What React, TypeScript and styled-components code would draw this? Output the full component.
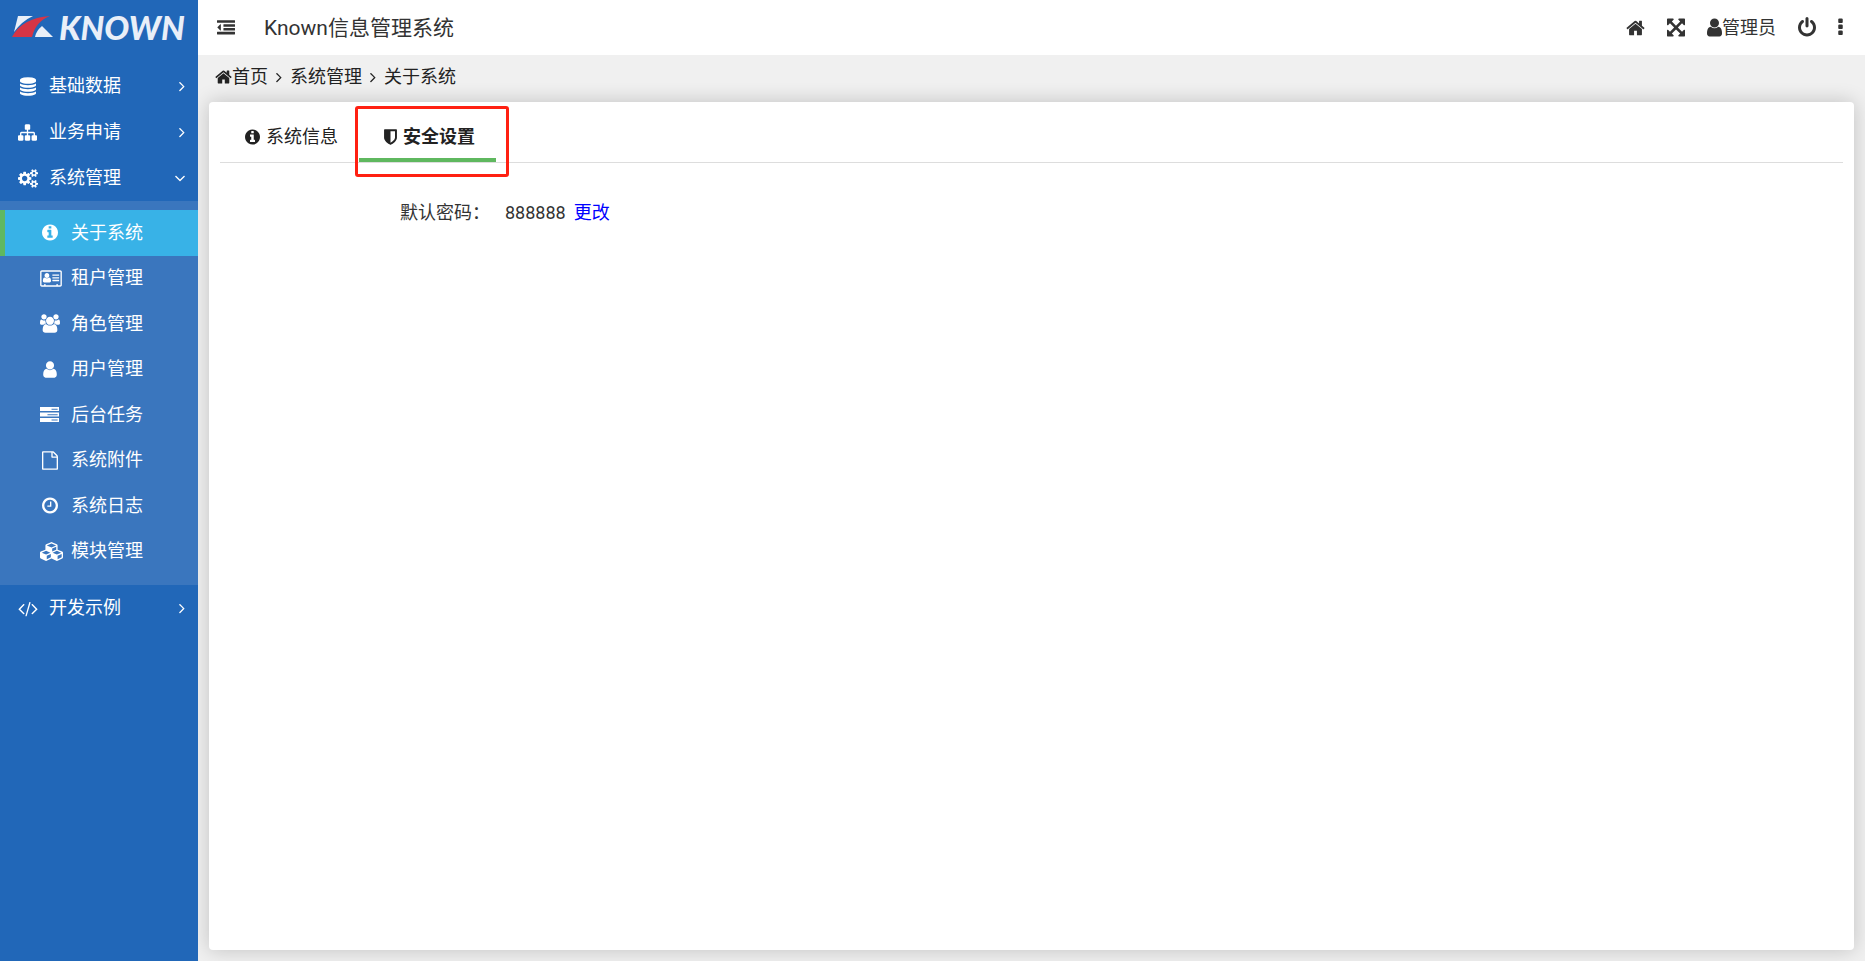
import React from 'react';
import styled, { createGlobalStyle, css } from 'styled-components';

const GlobalStyle = createGlobalStyle`
  *, *::before, *::after { box-sizing: border-box; }
  body {
    margin: 0;
    background: #f0f0f0;
    color: #333;
    font-family: Roboto, "Noto Sans CJK SC", sans-serif;
    font-size: 18px;
    font-weight: 400;
    line-height: 24px;
  }
  a { color: inherit; text-decoration: none; }
  ul, ol, dl, dd, h1 { margin: 0; padding: 0; list-style: none; }
  button { border: 0; padding: 0; background: none; font: inherit; color: inherit; cursor: pointer; }
`;

/* Each glyph: [left edge, advance width, path] on a 1792 unit tall grid. */
const glyphs = {
  home: [64, 1664, 'M1472 992v480q0 26-19 45t-45 19h-384v-384h-256v384h-384q-26 0-45-19t-19-45v-480q0-1 .5-3t.5-3l575-474 575 474q1 2 1 6zm223-69l-62 74q-8 9-21 11h-3q-13 0-21-7l-692-577-692 577q-12 8-24 7-13-2-21-11l-62-74q-8-10-7-23.5t11-21.5l719-599q32-26 76-26t76 26l244 204v-195q0-14 9-23t23-9h192q14 0 23 9t9 23v408l219 182q10 8 11 21.5t-7 23.5z'],
  database: [128, 1536, 'M896 768q237 0 443-43t325-127v170q0 69-103 128t-280 93.5-385 34.5-385-34.5-280-93.5-103-128v-170q119 84 325 127t443 43zm0 768q237 0 443-43t325-127v170q0 69-103 128t-280 93.5-385 34.5-385-34.5-280-93.5-103-128v-170q119 84 325 127t443 43zm0-384q237 0 443-43t325-127v170q0 69-103 128t-280 93.5-385 34.5-385-34.5-280-93.5-103-128v-170q119 84 325 127t443 43zm0-1152q208 0 385 34.5t280 93.5 103 128v128q0 69-103 128t-280 93.5-385 34.5-385-34.5-280-93.5-103-128v-128q0-69 103-128t280-93.5 385-34.5z'],
  sitemap: [0, 1792, 'M1792 1248v320q0 40-28 68t-68 28h-320q-40 0-68-28t-28-68v-320q0-40 28-68t68-28h96v-192h-512v192h96q40 0 68 28t28 68v320q0 40-28 68t-68 28h-320q-40 0-68-28t-28-68v-320q0-40 28-68t68-28h96v-192h-512v192h96q40 0 68 28t28 68v320q0 40-28 68t-68 28h-320q-40 0-68-28t-28-68v-320q0-40 28-68t68-28h96v-192q0-52 38-90t90-38h512v-192h-96q-40 0-68-28t-28-68v-320q0-40 28-68t68-28h320q40 0 68 28t28 68v320q0 40-28 68t-68 28h-96v192h512q52 0 90 38t38 90v192h96q40 0 68 28t28 68z'],
  cogs: [0, 1920, 'M896 896q0-106-75-181t-181-75-181 75-75 181 75 181 181 75 181-75 75-181zm768 512q0-52-38-90t-90-38-90 38-38 90q0 53 37.5 90.5t90.5 37.5 90.5-37.5 37.5-90.5zm0-1024q0-52-38-90t-90-38-90 38-38 90q0 53 37.5 90.5t90.5 37.5 90.5-37.5 37.5-90.5zm-384 421v185q0 10-7 19.5t-16 10.5l-155 24q-11 35-32 76 34 48 90 115 7 11 7 20 0 12-7 19-23 30-82.5 89.5t-78.5 59.5q-11 0-21-7l-115-90q-37 19-77 31-11 108-23 155-7 24-30 24h-186q-11 0-20-7.5t-10-17.5l-23-153q-34-10-75-31l-118 89q-7 7-20 7-11 0-21-8-144-133-144-160 0-9 7-19 10-14 41-53t47-61q-23-44-35-82l-152-24q-10-1-17-9.5t-7-19.5v-185q0-10 7-19.5t16-10.5l155-24q11-35 32-76-34-48-90-115-7-11-7-20 0-12 7-20 22-30 82-89t79-59q11 0 21 7l115 90q34-18 77-32 11-108 23-154 7-24 30-24h186q11 0 20 7.5t10 17.5l23 153q34 10 75 31l118-89q8-7 20-7 11 0 21 8 144 133 144 160 0 8-7 19-12 16-42 54t-45 60q23 48 34 82l152 23q10 2 17 10.5t7 19.5zm640 533v140q0 16-149 31-12 27-30 52 51 113 51 138 0 4-4 7-122 71-124 71-8 0-46-47t-52-68q-20 2-30 2t-30-2q-14 21-52 68t-46 47q-2 0-124-71-4-3-4-7 0-25 51-138-18-25-30-52-149-15-149-31v-140q0-16 149-31 13-29 30-52-51-113-51-138 0-4 4-7 4-2 35-20t59-34 30-16q8 0 46 46.5t52 67.5q20-2 30-2t30 2q51-71 92-112l6-2q4 0 124 70 4 3 4 7 0 25-51 138 17 23 30 52 149 15 149 31zm0-1024v140q0 16-149 31-12 27-30 52 51 113 51 138 0 4-4 7-122 71-124 71-8 0-46-47t-52-68q-20 2-30 2t-30-2q-14 21-52 68t-46 47q-2 0-124-71-4-3-4-7 0-25 51-138-18-25-30-52-149-15-149-31v-140q0-16 149-31 13-29 30-52-51-113-51-138 0-4 4-7 4-2 35-20t59-34 30-16q8 0 46 46.5t52 67.5q20-2 30-2t30 2q51-71 92-112l6-2q4 0 124 70 4 3 4 7 0 25-51 138 17 23 30 52 149 15 149 31z'],
  info: [128, 1536, 'M1152 1376v-160q0-14-9-23t-23-9h-96v-512q0-14-9-23t-23-9h-320q-14 0-23 9t-9 23v160q0 14 9 23t23 9h96v320h-96q-14 0-23 9t-9 23v160q0 14 9 23t23 9h448q14 0 23-9t9-23zm-128-896v-160q0-14-9-23t-23-9h-192q-14 0-23 9t-9 23v160q0 14 9 23t23 9h192q14 0 23-9t9-23zm640 416q0 209-103 385.5t-279.5 279.5-385.5 103-385.5-103-279.5-279.5-103-385.5 103-385.5 279.5-279.5 385.5-103 385.5 103 279.5 279.5 103 385.5z'],
  card: [0, 2048, 'M1024 1131q0-64-9-117.5t-29.5-103-60.5-78-97-28.5q-6 4-30 18t-37.5 21.5-35.5 17.5-43 14.5-42 4.5-42-4.5-43-14.5-35.5-17.5-37.5-21.5-30-18q-57 0-97 28.5t-60.5 78-29.5 103-9 117.5 37 106.5 91 42.5h512q54 0 91-42.5t37-106.5zm-157-520q0-94-66.5-160.5t-160.5-66.5-160.5 66.5-66.5 160.5 66.5 160.5 160.5 66.5 160.5-66.5 66.5-160.5zm925 509v-64q0-14-9-23t-23-9h-576q-14 0-23 9t-9 23v64q0 14 9 23t23 9h576q14 0 23-9t9-23zm0-260v-56q0-15-10.5-25.5t-25.5-10.5h-568q-15 0-25.5 10.5t-10.5 25.5v56q0 15 10.5 25.5t25.5 10.5h568q15 0 25.5-10.5t10.5-25.5zm0-252v-64q0-14-9-23t-23-9h-576q-14 0-23 9t-9 23v64q0 14 9 23t23 9h576q14 0 23-9t9-23zM160 128H1888q66 0 113 47t47 113V1504q0 66-47 113t-113 47H160q-66 0-113-47T0 1504V288q0-66 47-113t113-47zM160 256q-32 0-32 32V1504q0 32 32 32H384V1440q0-32 32-32h64q32 0 32 32v96H1536v-96q0-32 32-32h64q32 0 32 32v96h224q32 0 32-32V288q0-32-32-32z'],
  users: [64, 1920, 'M657 896q-162 5-265 128h-134q-82 0-138-40.5t-56-118.5q0-353 124-353 6 0 43.5 21t97.5 42.5 119 21.5q67 0 133-23-5 37-5 66 0 139 81 256zm1071 637q0 120-73 189.5t-194 69.5h-874q-121 0-194-69.5t-73-189.5q0-53 3.5-103.5t14-109 26.5-108.5 43-97.5 62-81 85.5-53.5 111.5-20q10 0 43 21.5t73 48 107 48 135 21.5 135-21.5 107-48 73-48 43-21.5q61 0 111.5 20t85.5 53.5 62 81 43 97.5 26.5 108.5 14 109 3.5 103.5zm-1024-1277q0 106-75 181t-181 75-181-75-75-181 75-181 181-75 181 75 75 181zm704 384q0 159-112.5 271.5t-271.5 112.5-271.5-112.5-112.5-271.5 112.5-271.5 271.5-112.5 271.5 112.5 112.5 271.5zm576 225q0 78-56 118.5t-138 40.5h-134q-103-123-265-128 81-117 81-256 0-29-5-66 66 23 133 23 59 0 119-21.5t97.5-42.5 43.5-21q124 0 124 353zm-128-609q0 106-75 181t-181 75-181-75-75-181 75-181 181-75 181 75 75 181z'],
  user: [256, 1280, 'M1536 1399q0 109-62.5 187t-150.5 78h-854q-88 0-150.5-78t-62.5-187q0-85 8.5-160.5t31.5-152 58.5-131 94-89 134.5-34.5q131 128 313 128t313-128q76 0 134.5 34.5t94 89 58.5 131 31.5 152 8.5 160.5zm-256-887q0 159-112.5 271.5t-271.5 112.5-271.5-112.5-112.5-271.5 112.5-271.5 271.5-112.5 271.5 112.5 112.5 271.5z'],
  server: [0, 1792, 'M0 192H1792V576H0ZM0 704H1792V1088H0ZM0 1216H1792V1600H0ZM1088 352H1664V448H1088ZM704 864H1664V960H704ZM1088 1376H1664V1472H1088Z'],
  file: [128, 1536, 'M1596 380q28 28 48 76t20 88v1152q0 40-28 68t-68 28h-1344q-40 0-68-28t-28-68v-1600q0-40 28-68t68-28h896q40 0 88 20t76 48zm-444-244v376h376q-10-29-22-41l-313-313q-12-12-41-22zm384 1528v-1024h-416q-40 0-68-28t-28-68v-416h-768v1536h1280z'],
  clock: [128, 1536, 'M1024 544v448q0 14-9 23t-23 9h-320q-14 0-23-9t-9-23v-64q0-14 9-23t23-9h224v-352q0-14 9-23t23-9h64q14 0 23 9t9 23zm416 352q0-148-73-273t-198-198-273-73-273 73-198 198-73 273 73 273 198 198 273 73 273-73 198-198 73-273zm224 0q0 209-103 385.5t-279.5 279.5-385.5 103-385.5-103-279.5-279.5-103-385.5 103-385.5 279.5-279.5 385.5-103 385.5 103 279.5 279.5 103 385.5z'],
  cubes: [0, 2176, 'M640 1632l384-192v-314l-384 164v342zm-64-454l404-173-404-173-404 173zm1088 454l384-192v-314l-384 164v342zm-64-454l404-173-404-173-404 173zm-448-293l384-165v-266l-384 164v267zm-64-379l441-189-441-189-441 189zm1088 518v416q0 36-19 67t-52 47l-448 224q-25 14-57 14t-57-14l-448-224q-4-2-7-4-2 2-7 4l-448 224q-25 14-57 14t-57-14l-448-224q-33-16-52-47t-19-67v-416q0-38 21.5-70t56.5-48l434-186v-400q0-38 21.5-70t56.5-48l448-192q23-10 50-10t50 10l448 192q35 16 56.5 48t21.5 70v400l434 186q36 16 57 48t21 70z'],
  code: [-64, 1920, 'M553 1399l-50 50q-10 10-23 10t-23-10l-466-466q-10-10-10-23t10-23l466-466q10-10 23-10t23 10l50 50q10 10 10 23t-10 23l-393 393 393 393q10 10 10 23t-10 23zm591-1067l-373 1291q-4 13-15.5 19.5t-23.5 2.5l-62-17q-13-4-19.5-15.5t-2.5-24.5l373-1291q4-13 15.5-19.5t23.5-2.5l62 17q13 4 19.5 15.5t2.5 24.5zm657 651l-466 466q-10 10-23 10t-23-10l-50-50q-10-10-10-23t10-23l393-393-393-393q-10-10-10-23t10-23l50-50q10-10 23-10t23 10l466 466q10 10 10 23t-10 23z'],
  outdent: [0, 1792, 'M384 544v576q0 13-9.500 22.500t-22.500 9.500q-14 0-23-9l-288-288q-9-9-9-23t9-23l288-288q9-9 23-9 13 0 22.500 9.500t9.500 22.500zM32 1280h1728q32 0 32 32v192q0 32-32 32h-1728q-32 0-32-32v-192q0-32 32-32zM672 896h1088q32 0 32 32v192q0 32-32 32h-1088q-32 0-32-32v-192q0-32 32-32zM672 512h1088q32 0 32 32v192q0 32-32 32h-1088q-32 0-32-32v-192q0-32 32-32zM32 128h1728q32 0 32 32v192q0 32-32 32h-1728q-32 0-32-32v-192q0-32 32-32z'],
  expand: [128, 1536, 'M1411 541l-355 355 355 355 144-144q29-31 70-14 39 17 39 59v448q0 26-19 45t-45 19h-448q-42 0-59-40-17-39 14-69l144-144-355-355-355 355 144 144q31 30 14 69-17 40-59 40h-448q-26 0-45-19t-19-45v-448q0-42 40-59 39-17 69 14l144 144 355-355-355-355-144 144q-19 19-45 19-12 0-24-5-40-17-40-59v-448q0-26 19-45t45-19h448q42 0 59 40 17 39-14 69l-144 144 355 355 355-355-144-144q-31-30-14-69 17-40 59-40h448q26 0 45 19t19 45v448q0 42-39 59-13 5-25 5-26 0-45-19z'],
  power: [128, 1536, 'M1664 896q0 156-61 298t-164 245-245 164-298 61-298-61-245-164-164-245-61-298q0-182 80.500-343t226.500-270q43-32 95.500-25t83.500 50q32 42 24.500 94.500t-49.500 84.500q-98 74-151.500 181t-53.500 228q0 104 40.500 198.500t109.500 163.500 163.500 109.500 198.500 40.500 198.500-40.500 163.500-109.500 109.500-163.500 40.500-198.500q0-121-53.500-228t-151.500-181q-42-32-49.500-84.500t24.500-94.500q31-43 84-50t95 25q146 109 226.500 270t80.500 343zm-640-768v640q0 52-38 90t-90 38-90-38-38-90v-640q0-52 38-90t90-38 90 38 38 90z'],
  more: [704, 384, 'M1088 1248v192q0 40-28 68t-68 28h-192q-40 0-68-28t-28-68v-192q0-40 28-68t68-28h192q40 0 68 28t28 68zm0-512v192q0 40-28 68t-68 28h-192q-40 0-68-28t-28-68v-192q0-40 28-68t68-28h192q40 0 68 28t28 68zm0-512v192q0 40-28 68t-68 28h-192q-40 0-68-28t-28-68v-192q0-40 28-68t68-28h192q40 0 68 28t28 68z'],
  shield: [256, 1280, 'M1344 960v-640h-448v1137q119-63 213-137 235-184 235-360zm192-768v768q0 86-33.500 170.500t-83 150-118 127.500-126.500 103-121 77.500-89.500 49.500-42.500 20q-12 6-26 6t-26-6q-16-7-42.500-20t-89.500-49.500-121-77.500-126.500-103-118-127.500-83-150-33.500-170.500v-768q0-26 19-45t45-19h1152q26 0 45 19t19 45z'],
  right: [576, 640, 'M1171 960q0 13-10 23l-466 466q-10 10-23 10t-23-10l-50-50q-10-10-10-23t10-23l393-393-393-393q-10-10-10-23t10-23l50-50q10-10 23-10t23 10l466 466q10 10 10 23z'],
  down: [384, 1024, 'M1395 736q0 13-10 23l-466 466q-10 10-23 10t-23-10l-466-466q-10-10-10-23t10-23l50-50q10-10 23-10t23 10l393 393 393-393q10-10 23-10t23 10l50 50q10 10 10 23z'],
} satisfies Record<string, [number, number, string]>;

type GlyphName = keyof typeof glyphs;

const Svg = styled.svg`
  display: block;
  flex: none;
  overflow: visible;
  fill: currentColor;
`;

function Icon({ name, size = 18 }: { name: GlyphName; size?: number }) {
  const [left, width, path] = glyphs[name];
  return (
    <Svg
      aria-hidden="true"
      height={size}
      width={Math.round((Number(width) * size) / 1792)}
      viewBox={`${left} 0 ${width} 1792`}
    >
      <path d={path as string} fillRule="evenodd" />
    </Svg>
  );
}

const Shell = styled.div`
  display: grid;
  grid-template-columns: 198px minmax(0, 1fr);
  min-height: 100vh;
`;

const Sidebar = styled.aside`
  background: #2167b8;
  color: #fff;
  z-index: 1;
`;

const Brand = styled.a`
  display: flex;
  align-items: center;
  gap: 6px;
  height: 53px;
  padding-left: 12px;
  margin-bottom: 10px;
  color: #e9eff8;
  font: italic 900 33px/32px Lato, sans-serif;
`;

const rowStyle = css`
  display: flex;
  align-items: center;
  width: 100%;
  text-align: left;
`;

const GroupButton = styled.button`
  ${rowStyle}
  height: 46px;
  padding: 0 13px 0 18px;
`;

const IconSlot = styled.span`
  display: flex;
  justify-content: safe center;
  width: 19px;
  margin-right: 12px;
`;

const GroupLabel = styled.span`
  flex: 1;
`;

const SubMenu = styled.ul`
  display: grid;
  grid-auto-rows: 1fr;
  height: 384px;
  padding: 9px 0 11px;
  background: #3a76be;
`;

const SubLink = styled.a<{ $active?: boolean }>`
  ${rowStyle}
  height: 100%;
  padding-left: 35px;
  border-left: 5px solid ${(p) => (p.$active ? '#5fb85f' : 'transparent')};
  background: ${(p) => (p.$active ? '#38b2e7' : 'transparent')};
`;

const Main = styled.div`
  display: flex;
  flex-direction: column;
`;

const Header = styled.header`
  display: flex;
  align-items: center;
  height: 55px;
  padding: 0 22px 0 19px;
  background: #fff;
`;

const Title = styled.h1`
  flex: 1;
  margin-left: 29px;
  font-size: 21px;
  font-weight: 400;
  line-height: 28px;
`;

const Tools = styled.div`
  display: flex;
  align-items: center;
  gap: 22px;
`;

const ToolButton = styled.button`
  display: flex;
  align-items: center;
`;

const Crumbs = styled.ol`
  display: flex;
  align-items: center;
  height: 44px;
  padding-left: 17px;
  color: #222;
`;

const Crumb = styled.li`
  display: flex;
  align-items: center;
`;

const CrumbLink = styled.a`
  display: flex;
  align-items: center;
`;

const CrumbMark = styled.span`
  margin: 0 8px;
`;

const Panel = styled.main`
  flex: 1;
  margin: 3px 11px 11px;
  padding: 11px;
  border-radius: 4px;
  background: #fff;
  box-shadow: 0 0 20px rgba(0, 0, 0, 0.2);
`;

const Tabs = styled.div`
  display: flex;
  height: 50px;
  border-bottom: 1px solid #ddd;
`;

const Tab = styled.button<{ $active?: boolean }>`
  display: flex;
  align-items: center;
  gap: 6px;
  height: 49px;
  padding: 2px 21px 0 25px;
  border-bottom: 4px solid ${(p) => (p.$active ? '#5fb85f' : 'transparent')};
  color: #222;
  font-weight: ${(p) => (p.$active ? 700 : 400)};
`;

const TabFrame = styled.div`
  position: relative;
`;

const Highlight = styled.span`
  position: absolute;
  inset: -7px -13px -15px -4px;
  border: 3px solid #ff2012;
  border-radius: 3px;
  pointer-events: none;
`;

const Fields = styled.dl`
  display: grid;
  grid-template-columns: 270px 1fr;
  column-gap: 15px;
  padding-top: 38px;
`;

const FieldName = styled.dt`
  text-align: right;
`;

const FieldValue = styled.dd`
  display: flex;
  gap: 8px;
`;

const ChangeLink = styled.a`
  color: #00f;
`;

const pages: { icon: GlyphName; label: string; active?: boolean }[] = [
  { icon: 'info', label: '关于系统', active: true },
  { icon: 'card', label: '租户管理' },
  { icon: 'users', label: '角色管理' },
  { icon: 'user', label: '用户管理' },
  { icon: 'server', label: '后台任务' },
  { icon: 'file', label: '系统附件' },
  { icon: 'clock', label: '系统日志' },
  { icon: 'cubes', label: '模块管理' },
];

function Group({ icon, label, open }: { icon: GlyphName; label: string; open?: boolean }) {
  return (
    <GroupButton type="button" aria-expanded={!!open}>
      <IconSlot><Icon name={icon} size={19} /></IconSlot>
      <GroupLabel>{label}</GroupLabel>
      <Icon name={open ? 'down' : 'right'} />
    </GroupButton>
  );
}

export default function App() {
  return (
    <>
      <GlobalStyle />
      <Shell>
        <Sidebar>
          <Brand href="#">
            <svg width="41" height="22" viewBox="0 0 41 22" aria-hidden="true">
              <path d="M6 0H21Q10 5 2 16Z" fill="#e9eff8" />
              <path d="M38 0Q24 5 20 21H0Q10 2 38 0Z" fill="#d63545" />
              <path d="M30 10L41 21H23Q24 15 30 10Z" fill="#e9eff8" />
            </svg>
            KNOWN
          </Brand>
          <nav>
            <Group icon="database" label="基础数据" />
            <Group icon="sitemap" label="业务申请" />
            <Group icon="cogs" label="系统管理" open />
            <SubMenu>
              {pages.map((page) => (
                <li key={page.label}>
                  <SubLink href="#" $active={page.active}>
                    <IconSlot><Icon name={page.icon} size={19} /></IconSlot>
                    {page.label}
                  </SubLink>
                </li>
              ))}
            </SubMenu>
            <Group icon="code" label="开发示例" />
          </nav>
        </Sidebar>
        <Main>
          <Header>
            <ToolButton type="button" aria-label="收起菜单"><Icon name="outdent" /></ToolButton>
            <Title>Known信息管理系统</Title>
            <Tools>
              <ToolButton type="button" aria-label="首页"><Icon name="home" size={20} /></ToolButton>
              <ToolButton type="button" aria-label="全屏"><Icon name="expand" size={21} /></ToolButton>
              <ToolButton type="button"><Icon name="user" size={21} />管理员</ToolButton>
              <ToolButton type="button" aria-label="退出"><Icon name="power" size={21} /></ToolButton>
              <ToolButton type="button" aria-label="更多"><Icon name="more" size={21} /></ToolButton>
            </Tools>
          </Header>
          <Crumbs>
            <Crumb><CrumbLink href="#"><Icon name="home" />首页</CrumbLink></Crumb>
            <Crumb><CrumbMark><Icon name="right" /></CrumbMark>系统管理</Crumb>
            <Crumb><CrumbMark><Icon name="right" /></CrumbMark>关于系统</Crumb>
          </Crumbs>
          <Panel>
            <Tabs role="tablist">
              <Tab type="button" role="tab" aria-selected="false"><Icon name="info" />系统信息</Tab>
              <TabFrame>
                <Tab type="button" role="tab" aria-selected="true" $active><Icon name="shield" />安全设置</Tab>
                <Highlight />
              </TabFrame>
            </Tabs>
            <Fields>
              <FieldName>默认密码：</FieldName>
              <FieldValue>888888 <ChangeLink href="#">更改</ChangeLink></FieldValue>
            </Fields>
          </Panel>
        </Main>
      </Shell>
    </>
  );
}
